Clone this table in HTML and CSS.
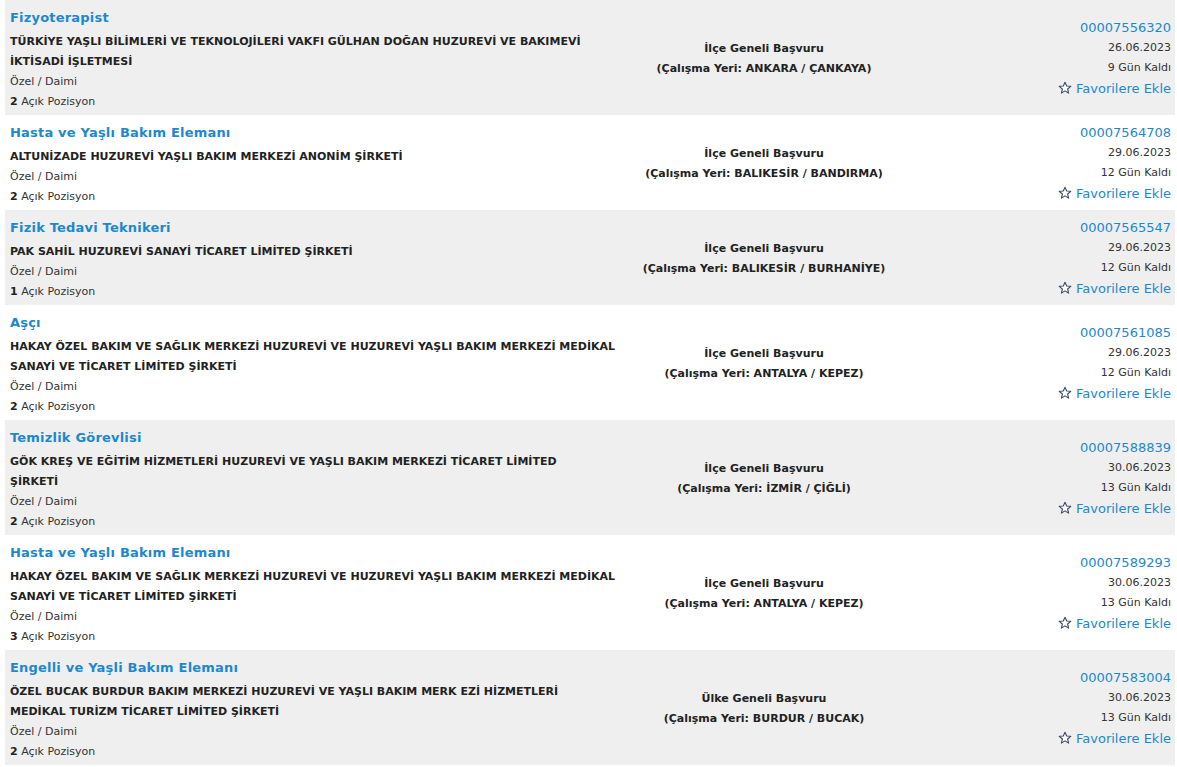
FILE: index.html
```html
<!DOCTYPE html>
<html lang="tr">
<head>
<meta charset="utf-8">
<title>İlanlar</title>
<link rel="stylesheet" href="styles.css">
</head>
<body>
<div class="list">
  <div class="row gray">
    <div class="main">
      <a class="title" href="#">Fizyoterapist</a>
      <div class="company">TÜRKİYE YAŞLI BİLİMLERİ VE TEKNOLOJİLERİ VAKFI GÜLHAN DOĞAN HUZUREVİ VE BAKIMEVİ<br>İKTİSADİ İŞLETMESİ</div>
      <div class="meta">Özel / Daimi</div>
      <div class="meta"><b>2</b> Açık Pozisyon</div>
    </div>
    <div class="mid">İlçe Geneli Başvuru<br>(Çalışma Yeri: ANKARA / ÇANKAYA)</div>
    <div class="side">
      <a class="num" href="#">00007556320</a>
      <div class="meta">26.06.2023</div>
      <div class="meta">9 Gün Kaldı</div>
      <a class="fav" href="#"><svg viewBox="0 0 14 14" width="14" height="14"><path d="M7 1.2 8.7 5 12.8 5.3 9.6 8 10.6 12.1 7 9.9 3.4 12.1 4.4 8 1.2 5.3 5.3 5Z" fill="#fff" stroke="#3b4a66" stroke-width="1.1" stroke-linejoin="round"/></svg>Favorilere Ekle</a>
    </div>
  </div>

  <div class="row">
    <div class="main">
      <a class="title" href="#">Hasta ve Yaşlı Bakım Elemanı</a>
      <div class="company">ALTUNİZADE HUZUREVİ YAŞLI BAKIM MERKEZİ ANONİM ŞİRKETİ</div>
      <div class="meta">Özel / Daimi</div>
      <div class="meta"><b>2</b> Açık Pozisyon</div>
    </div>
    <div class="mid">İlçe Geneli Başvuru<br>(Çalışma Yeri: BALIKESİR / BANDIRMA)</div>
    <div class="side">
      <a class="num" href="#">00007564708</a>
      <div class="meta">29.06.2023</div>
      <div class="meta">12 Gün Kaldı</div>
      <a class="fav" href="#"><svg viewBox="0 0 14 14" width="14" height="14"><path d="M7 1.2 8.7 5 12.8 5.3 9.6 8 10.6 12.1 7 9.9 3.4 12.1 4.4 8 1.2 5.3 5.3 5Z" fill="#fff" stroke="#3b4a66" stroke-width="1.1" stroke-linejoin="round"/></svg>Favorilere Ekle</a>
    </div>
  </div>

  <div class="row gray">
    <div class="main">
      <a class="title" href="#">Fizik Tedavi Teknikeri</a>
      <div class="company">PAK SAHİL HUZUREVİ SANAYİ TİCARET LİMİTED ŞİRKETİ</div>
      <div class="meta">Özel / Daimi</div>
      <div class="meta"><b>1</b> Açık Pozisyon</div>
    </div>
    <div class="mid">İlçe Geneli Başvuru<br>(Çalışma Yeri: BALIKESİR / BURHANİYE)</div>
    <div class="side">
      <a class="num" href="#">00007565547</a>
      <div class="meta">29.06.2023</div>
      <div class="meta">12 Gün Kaldı</div>
      <a class="fav" href="#"><svg viewBox="0 0 14 14" width="14" height="14"><path d="M7 1.2 8.7 5 12.8 5.3 9.6 8 10.6 12.1 7 9.9 3.4 12.1 4.4 8 1.2 5.3 5.3 5Z" fill="#fff" stroke="#3b4a66" stroke-width="1.1" stroke-linejoin="round"/></svg>Favorilere Ekle</a>
    </div>
  </div>

  <div class="row">
    <div class="main">
      <a class="title" href="#">Aşçı</a>
      <div class="company">HAKAY ÖZEL BAKIM VE SAĞLIK MERKEZİ HUZUREVİ VE HUZUREVİ YAŞLI BAKIM MERKEZİ MEDİKAL<br>SANAYİ VE TİCARET LİMİTED ŞİRKETİ</div>
      <div class="meta">Özel / Daimi</div>
      <div class="meta"><b>2</b> Açık Pozisyon</div>
    </div>
    <div class="mid">İlçe Geneli Başvuru<br>(Çalışma Yeri: ANTALYA / KEPEZ)</div>
    <div class="side">
      <a class="num" href="#">00007561085</a>
      <div class="meta">29.06.2023</div>
      <div class="meta">12 Gün Kaldı</div>
      <a class="fav" href="#"><svg viewBox="0 0 14 14" width="14" height="14"><path d="M7 1.2 8.7 5 12.8 5.3 9.6 8 10.6 12.1 7 9.9 3.4 12.1 4.4 8 1.2 5.3 5.3 5Z" fill="#fff" stroke="#3b4a66" stroke-width="1.1" stroke-linejoin="round"/></svg>Favorilere Ekle</a>
    </div>
  </div>

  <div class="row gray">
    <div class="main">
      <a class="title" href="#">Temizlik Görevlisi</a>
      <div class="company">GÖK KREŞ VE EĞİTİM HİZMETLERİ HUZUREVİ VE YAŞLI BAKIM MERKEZİ TİCARET LİMİTED<br>ŞİRKETİ</div>
      <div class="meta">Özel / Daimi</div>
      <div class="meta"><b>2</b> Açık Pozisyon</div>
    </div>
    <div class="mid">İlçe Geneli Başvuru<br>(Çalışma Yeri: İZMİR / ÇİĞLİ)</div>
    <div class="side">
      <a class="num" href="#">00007588839</a>
      <div class="meta">30.06.2023</div>
      <div class="meta">13 Gün Kaldı</div>
      <a class="fav" href="#"><svg viewBox="0 0 14 14" width="14" height="14"><path d="M7 1.2 8.7 5 12.8 5.3 9.6 8 10.6 12.1 7 9.9 3.4 12.1 4.4 8 1.2 5.3 5.3 5Z" fill="#fff" stroke="#3b4a66" stroke-width="1.1" stroke-linejoin="round"/></svg>Favorilere Ekle</a>
    </div>
  </div>

  <div class="row">
    <div class="main">
      <a class="title" href="#">Hasta ve Yaşlı Bakım Elemanı</a>
      <div class="company">HAKAY ÖZEL BAKIM VE SAĞLIK MERKEZİ HUZUREVİ VE HUZUREVİ YAŞLI BAKIM MERKEZİ MEDİKAL<br>SANAYİ VE TİCARET LİMİTED ŞİRKETİ</div>
      <div class="meta">Özel / Daimi</div>
      <div class="meta"><b>3</b> Açık Pozisyon</div>
    </div>
    <div class="mid">İlçe Geneli Başvuru<br>(Çalışma Yeri: ANTALYA / KEPEZ)</div>
    <div class="side">
      <a class="num" href="#">00007589293</a>
      <div class="meta">30.06.2023</div>
      <div class="meta">13 Gün Kaldı</div>
      <a class="fav" href="#"><svg viewBox="0 0 14 14" width="14" height="14"><path d="M7 1.2 8.7 5 12.8 5.3 9.6 8 10.6 12.1 7 9.9 3.4 12.1 4.4 8 1.2 5.3 5.3 5Z" fill="#fff" stroke="#3b4a66" stroke-width="1.1" stroke-linejoin="round"/></svg>Favorilere Ekle</a>
    </div>
  </div>

  <div class="row gray">
    <div class="main">
      <a class="title" href="#">Engelli ve Yaşli Bakım Elemanı</a>
      <div class="company">ÖZEL BUCAK BURDUR BAKIM MERKEZİ HUZUREVİ VE YAŞLI BAKIM MERK EZİ HİZMETLERİ<br>MEDİKAL TURİZM TİCARET LİMİTED ŞİRKETİ</div>
      <div class="meta">Özel / Daimi</div>
      <div class="meta"><b>2</b> Açık Pozisyon</div>
    </div>
    <div class="mid">Ülke Geneli Başvuru<br>(Çalışma Yeri: BURDUR / BUCAK)</div>
    <div class="side">
      <a class="num" href="#">00007583004</a>
      <div class="meta">30.06.2023</div>
      <div class="meta">13 Gün Kaldı</div>
      <a class="fav" href="#"><svg viewBox="0 0 14 14" width="14" height="14"><path d="M7 1.2 8.7 5 12.8 5.3 9.6 8 10.6 12.1 7 9.9 3.4 12.1 4.4 8 1.2 5.3 5.3 5Z" fill="#fff" stroke="#3b4a66" stroke-width="1.1" stroke-linejoin="round"/></svg>Favorilere Ekle</a>
    </div>
  </div>
</div>
</body>
</html>
```

FILE: styles.css
```css
html, body {
  margin: 0;
  padding: 0;
  background: #fff;
}
body {
  font-family: "DejaVu Sans", Verdana, sans-serif;
  font-size: 11px;
  color: #333;
}
.list {
  display: flex;
  flex-direction: column;
  padding: 0 2px 0 5px;
}
.row {
  display: grid;
  grid-template-columns: 610px 1fr 262px;
  padding: 8px 0 3px;
  background: #fff;
}
.row.gray {
  background: #efefef;
}
.main {
  padding-left: 5px;
  display: flex;
  flex-direction: column;
  align-items: flex-start;
  min-width: 0;
}
.title {
  font-size: 13px;
  font-weight: bold;
  letter-spacing: 0.2px;
  color: #1d88d0;
  text-decoration: none;
  line-height: 20px;
  margin-bottom: 4px;
}
.company {
  font-weight: bold;
  color: #222;
  line-height: 20px;
  white-space: nowrap;
}
.meta {
  line-height: 20px;
  color: #333;
}
.meta b {
  color: #222;
}
.mid {
  align-self: center;
  text-align: center;
  font-weight: bold;
  color: #222;
  line-height: 20px;
  margin: -1px 0 1px;
}
.side {
  align-self: center;
  display: flex;
  flex-direction: column;
  align-items: flex-end;
  padding-right: 4px;
  margin: -2px 0 2px;
}
.num {
  font-size: 13px;
  color: #1d88d0;
  text-decoration: none;
  line-height: 20px;
}
.fav {
  display: flex;
  align-items: center;
  gap: 4px;
  font-size: 13px;
  color: #1d88d0;
  text-decoration: none;
  line-height: 21px;
}
```
